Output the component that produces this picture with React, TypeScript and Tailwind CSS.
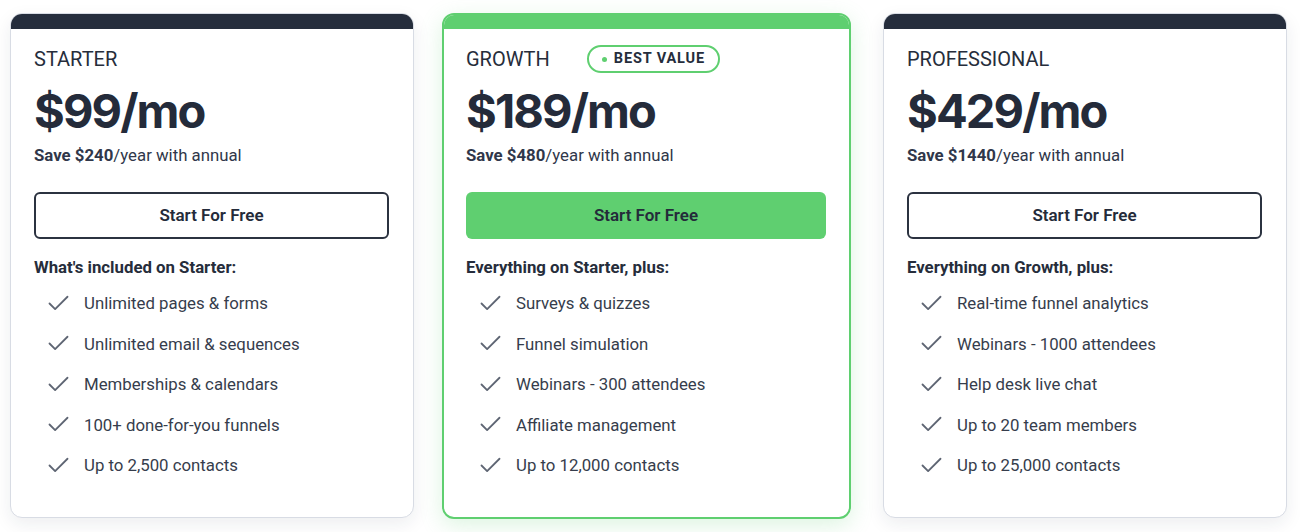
import { Check } from "lucide-react";

interface Plan {
  name: string;
  price: string;
  save: string;
  heading: string;
  features: string[];
  featured?: boolean;
}

const plans: Plan[] = [
  {
    name: "STARTER",
    price: "$99/mo",
    save: "$240",
    heading: "What's included on Starter:",
    features: [
      "Unlimited pages & forms",
      "Unlimited email & sequences",
      "Memberships & calendars",
      "100+ done-for-you funnels",
      "Up to 2,500 contacts",
    ],
  },
  {
    name: "GROWTH",
    price: "$189/mo",
    save: "$480",
    heading: "Everything on Starter, plus:",
    featured: true,
    features: [
      "Surveys & quizzes",
      "Funnel simulation",
      "Webinars - 300 attendees",
      "Affiliate management",
      "Up to 12,000 contacts",
    ],
  },
  {
    name: "PROFESSIONAL",
    price: "$429/mo",
    save: "$1440",
    heading: "Everything on Growth, plus:",
    features: [
      "Real-time funnel analytics",
      "Webinars - 1000 attendees",
      "Help desk live chat",
      "Up to 20 team members",
      "Up to 25,000 contacts",
    ],
  },
];

function PlanCard({ plan, className }: { plan: Plan; className?: string }) {
  const featured = plan.featured;
  return (
    <div
      className={`flex flex-col rounded-[12px] overflow-hidden bg-white ${
        featured
          ? "w-[409px] border-2 border-[#5fcf70] shadow-[0_6px_22px_rgba(95,207,112,0.22)]"
          : "w-[404px] border border-[#d8dce4] shadow-[0_6px_18px_rgba(30,40,60,0.08)]"
      } ${className ?? ""}`}
    >
      {/* top bar */}
      <div
        className={`${featured ? "h-[14px] bg-[#5fcf70]" : "h-[15px] bg-[#252d3c]"}`}
      />

      <div
        className={`flex flex-col pt-[18px] pb-[40px] ${
          featured ? "pl-[22px] pr-[23px]" : "pl-[23px] pr-[24px]"
        }`}
      >
        <div className="flex items-center h-[24px]">
          <span className="text-[20px] leading-[24px] text-[#262d3b]">{plan.name}</span>
          {featured && (
            <span className="ml-[37px] flex items-center h-[28px] px-[13px] rounded-full border-2 border-[#5fcf70] text-[14.5px] font-bold tracking-[0.06em] text-[#252d3c]">
              <span className="w-[5px] h-[5px] rounded-full bg-[#5fcf70] mr-[7px]" />
              BEST VALUE
            </span>
          )}
        </div>

        <div className="mt-[16px] h-[48px] text-[47px] leading-[48px] font-bold tracking-[-0.04em] text-[#242b3a] font-['Inter',sans-serif]">
          {plan.price}
        </div>

        <div className="mt-[8px] text-[16.8px] leading-[24px] text-[#30374a]">
          <span className="font-bold">Save {plan.save}</span>/year with annual
        </div>

        <button
          className={`mt-[25px] h-[47px] rounded-[6px] text-[17px] font-semibold text-[#242b3a] ${
            featured
              ? "bg-[#5fcf70]"
              : "border-2 border-[#2b3240] bg-white"
          }`}
        >
          Start For Free
        </button>

        <div className="mt-[16px] text-[16.8px] leading-[24px] font-bold text-[#262d3b]">
          {plan.heading}
        </div>

        <ul className="mt-[12px] flex flex-col gap-[16.5px] pl-[11px]">
          {plan.features.map((f) => (
            <li key={f} className="flex items-center h-[24px]">
              <Check size={27} strokeWidth={1.6} className="text-[#5e6573] shrink-0" />
              <span className="ml-[12px] text-[16.8px] leading-[24px] text-[#363d4c]">{f}</span>
            </li>
          ))}
        </ul>
      </div>
    </div>
  );
}

export default function App() {
  return (
    <div className="w-[1300px] h-[532px] bg-white font-['Roboto',sans-serif] pt-[13px] pl-[10px]">
      <div className="flex items-start">
        <PlanCard plan={plans[0]} />
        <PlanCard plan={plans[1]} className="ml-[28px] mr-[32px]" />
        <PlanCard plan={plans[2]} />
      </div>
    </div>
  );
}
